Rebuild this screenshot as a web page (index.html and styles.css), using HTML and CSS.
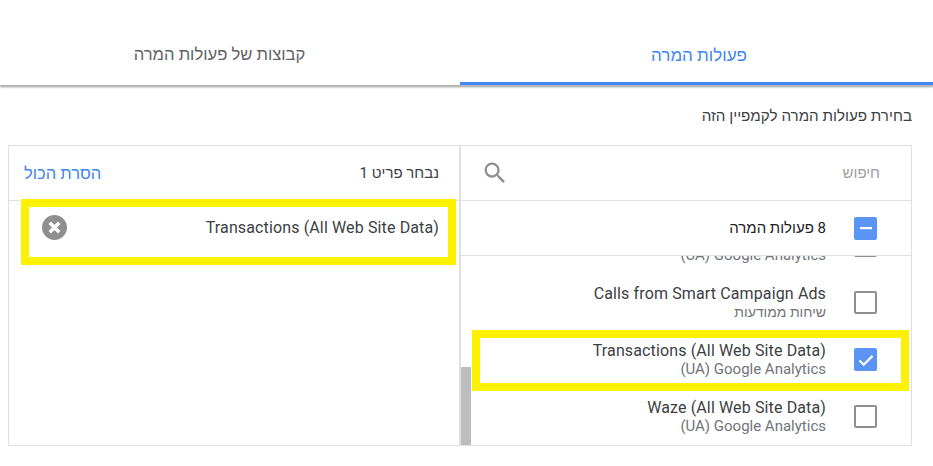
FILE: index.html
```html
<!DOCTYPE html>
<html lang="he" dir="rtl">
<head>
<meta charset="utf-8">
<title>פעולות המרה</title>
<link rel="stylesheet" href="styles.css">
</head>
<body>
<nav class="tabs">
  <div class="tab active">פעולות המרה</div>
  <div class="tab">קבוצות של פעולות המרה</div>
</nav>
<p class="lead">בחירת פעולות המרה לקמפיין הזה</p>
<section class="picker">
  <div class="pane source">
    <div class="pane-head search">
      <span class="placeholder">חיפוש</span>
      <svg class="search-icon" width="28" height="28" viewBox="0 0 24 24"><path fill="#8f8f8f" d="M15.5 14h-.79l-.28-.27A6.47 6.47 0 0 0 16 9.5 6.5 6.5 0 1 0 9.5 16c1.61 0 3.09-.59 4.23-1.57l.27.28v.79l5 4.99L20.49 19l-4.99-5zm-6 0C7.01 14 5 11.99 5 9.5S7.01 5 9.5 5 14 7.01 14 9.5 11.99 14 9.5 14z"/></svg>
    </div>
    <div class="all-row">
      <span class="box checked"><svg width="22" height="22" viewBox="0 0 22 22"><rect x="5" y="10" width="12" height="2.2" fill="#fff"/></svg></span>
      <span class="all-label">8 פעולות המרה</span>
    </div>
    <div class="list">
      <div class="scrollbar"></div>
      <div class="rows">
        <div class="row"><span class="box"></span><div class="texts"><div class="title">&nbsp;</div><div class="sub" dir="ltr">(UA) Google Analytics</div></div></div>
        <div class="row"><span class="box"></span><div class="texts"><div class="title" dir="ltr">Calls from Smart Campaign Ads</div><div class="sub he">שיחות ממודעות</div></div></div>
        <div class="row marked"><span class="box checked"><svg width="22" height="22" viewBox="0 0 22 22"><path d="M4.5 11.5l4.2 4.2 8.8-8.8" fill="none" stroke="#fff" stroke-width="2.2"/></svg></span><div class="texts"><div class="title" dir="ltr">Transactions (All Web Site Data)</div><div class="sub" dir="ltr">(UA) Google Analytics</div></div></div>
        <div class="row"><span class="box"></span><div class="texts"><div class="title" dir="ltr">Waze (All Web Site Data)</div><div class="sub" dir="ltr">(UA) Google Analytics</div></div></div>
      </div>
    </div>
  </div>
  <div class="pane chosen">
    <div class="pane-head">
      <span class="count">נבחר פריט 1</span>
      <span class="clear">הסרת הכול</span>
    </div>
    <div class="chosen-row">
      <span class="title" dir="ltr">Transactions (All Web Site Data)</span>
      <svg width="25" height="25" viewBox="0 0 24 24"><circle cx="12" cy="12" r="12" fill="#8f8f8f"/><path d="M7.5 7.5l9 9M16.5 7.5l-9 9" stroke="#fff" stroke-width="3.4"/></svg>
    </div>
  </div>
</section>
</body>
</html>
```
FILE: styles.css
```css
*, *::after { box-sizing: border-box; }
html, body { height: 100%; }
body {
  margin: 0;
  background: #fff;
  overflow: hidden;
  font-family: Roboto, "Liberation Sans", sans-serif;
  font-size: 14px;
  color: #3c4043;
}
.tabs {
  display: flex;
  height: 86px;
  border-bottom: 1px solid #b5b5b5;
  box-shadow: 0 1px 2px rgba(0,0,0,.4);
}
.tab {
  flex: 0 0 473px;
  padding-top: 45px;
  padding-left: 5px;
  text-align: center;
  font-size: 17px;
  line-height: 20px;
  color: #5f6368;
}
.tab + .tab { flex: 0 0 460px; padding: 45px 21px 0 0; font-size: 16.6px; }
.tab.active {
  color: #4285f4;
  border-bottom: 3px solid #4285f4;
}
.lead {
  margin: 21px 21px 0 0;
  line-height: 18px;
  font-size: 15.2px;
  color: #3c4043;
}
.picker {
  display: flex;
  width: 904px;
  height: 301px;
  margin: 20px 21px 0 0;
  border: 1px solid #e0e0e0;
}
.pane { display: flex; flex-direction: column; }
.source { width: 451px; border-left: 1px solid #e0e0e0; }
.chosen { flex: 1; border-right: 1px solid #e0e0e0; }
.pane-head {
  display: flex;
  align-items: center;
  justify-content: space-between;
  height: 55px;
  flex: none;
  border-bottom: 1px solid #e0e0e0;
}
.search { padding: 0 31px 0 20px; }
.placeholder { color: #9e9e9e; font-size: 15px; }
.all-row {
  display: flex;
  align-items: center;
  gap: 28px;
  height: 55px;
  flex: none;
  padding-right: 34px;
  border-bottom: 1px solid #e0e0e0;
  color: #212121;
  font-size: 15px;
}
.box {
  display: block;
  width: 23px;
  height: 23px;
  flex: none;
  border: 2px solid #8f8f8f;
  border-radius: 2px;
  background: #fff;
}
.box.checked { border: 0; background: #5a95f5; padding: .5px; }
.box svg { display: block; }
.list {
  position: relative;
  flex: 1;
  min-height: 0;
  overflow: hidden;
}
.scrollbar {
  position: absolute;
  left: 0;
  bottom: 0;
  width: 10px;
  height: 78px;
  background: #bdbdbd;
}
.rows { margin-top: -39px; }
.row {
  position: relative;
  display: flex;
  align-items: center;
  gap: 28px;
  height: 57px;
  padding-right: 34px;
}
.texts { line-height: 19px; text-align: right; }
.title { color: #3c4043; font-size: 16px; letter-spacing: .13px; }
.sub { color: #70757a; font-size: 15px; }
.sub.he { font-size: 14px; }
.row.marked { z-index: 1; }
.row.marked::after {
  content: "";
  position: absolute;
  top: -1px;
  left: 11px;
  right: 2px;
  height: 61px;
  border: 8px solid #fff200;
  pointer-events: none;
}
.chosen .pane-head { padding: 0 20px 0 15px; }
.clear { color: #4285f4; font-size: 16.5px; }
.count { color: #3c4043; font-size: 15px; }
.chosen-row {
  position: relative;
  display: flex;
  align-items: center;
  justify-content: space-between;
  height: 52px;
  padding: 0 20px 0 33px;
}
.chosen-row::after {
  content: "";
  position: absolute;
  top: -2px;
  left: 12px;
  right: 3px;
  height: 66px;
  border: 8px solid #fff200;
}
```
